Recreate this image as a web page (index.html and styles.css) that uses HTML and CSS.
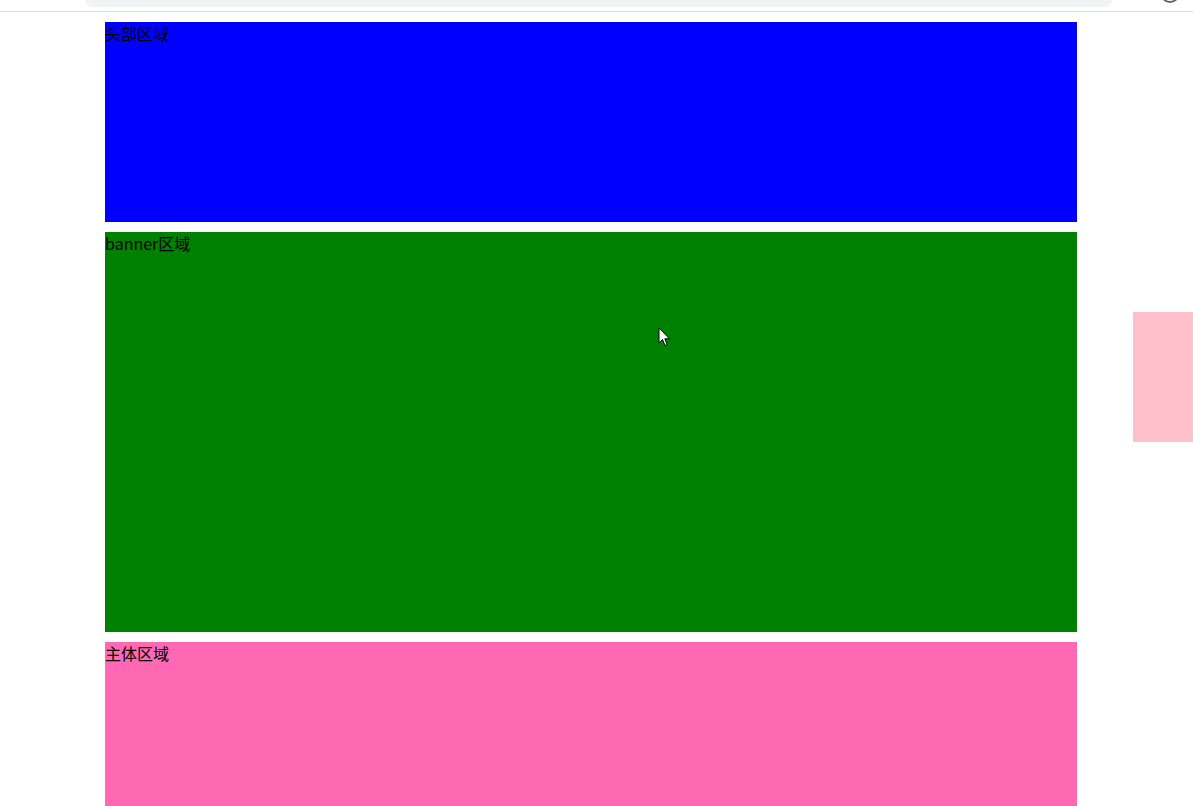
FILE: index.html
```html
<!DOCTYPE html>
<html lang="zh-CN">
<head>
<meta charset="utf-8">
<title>页面</title>
<link rel="stylesheet" href="styles.css">
</head>
<body>
<div class="chrome">
  <div class="omnibox"></div>
  <div class="avatar"></div>
</div>
<main class="page">
  <div class="block header">头部区域</div>
  <div class="block banner">banner区域</div>
  <div class="block main">主体区域</div>
</main>
<div class="side"></div>
<svg class="cursor" width="13" height="20" viewBox="0 0 13 20">
  <path d="M1 1 L1 16 L4.5 12.5 L7 18.5 L9.2 17.6 L6.8 11.8 L11.5 11.8 Z" fill="#fff" stroke="#000" stroke-width="1" stroke-linejoin="miter"/>
</svg>
</body>
</html>
```
FILE: styles.css
```css
html, body {
  margin: 0;
  padding: 0;
  background: #fff;
  overflow: hidden;
  height: 806px;
}
body {
  font-family: "Microsoft YaHei", "Noto Sans CJK SC", "Noto Sans", sans-serif;
  font-size: 16px;
  color: #000;
}
.chrome {
  position: relative;
  height: 11px;
  border-bottom: 1px solid #dadce0;
  background: #fff;
}
.omnibox {
  margin-left: 85px;
  width: 1027px;
  height: 7px;
  background: #f1f3f4;
  border-radius: 0 0 8px 8px;
}
.avatar {
  position: absolute;
  left: 1160px;
  top: -17px;
  width: 16px;
  height: 16px;
  border: 2px solid #5f6368;
  border-radius: 50%;
}
.page {
  padding: 10px 0 0 105px;
}
.block {
  width: 972px;
  margin-bottom: 10px;
  line-height: 22px;
}
.header {
  height: 200px;
  background: #0000ff;
}
.banner {
  height: 400px;
  background: #008000;
}
.main {
  height: 400px;
  background: #ff69b4;
}
.side {
  position: fixed;
  right: 0;
  top: 312px;
  width: 60px;
  height: 130px;
  background: #ffc0cb;
}
.cursor {
  position: absolute;
  left: 658px;
  top: 327px;
}
```
